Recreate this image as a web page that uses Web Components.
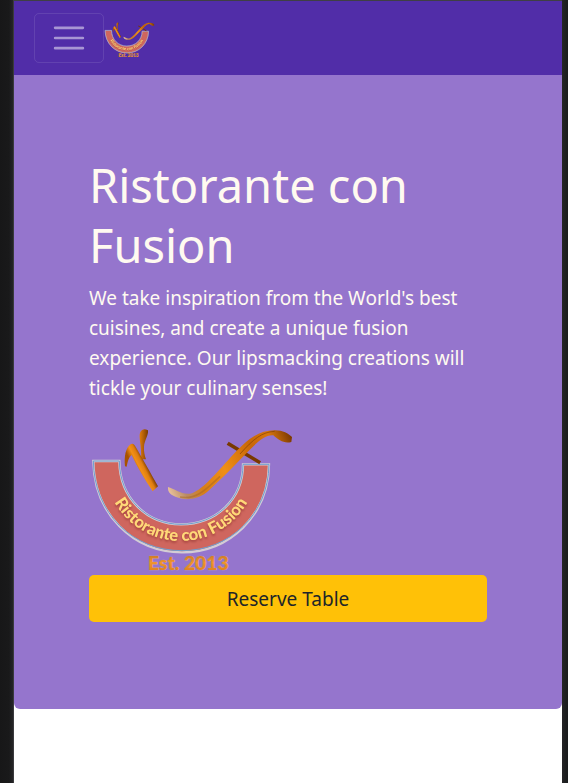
<!DOCTYPE html>
<html lang="en">
<head>
<meta charset="utf-8">
<meta name="viewport" content="width=device-width, initial-scale=1">
<title>Ristorante con Fusion</title>
<style>
  html { background: #19191a; }
  body { margin: 0; font-family: "Noto Sans", "Open Sans", sans-serif; }
</style>
</head>
<body>
<app-frame>
  <nav-bar slot="header"></nav-bar>
  <hero-banner>
    <span slot="title">Ristorante con Fusion</span>
    <span slot="lead">We take inspiration from the World's best cuisines, and create a unique fusion experience. Our lipsmacking creations will tickle your culinary senses!</span>
    <fusion-logo slot="logo"></fusion-logo>
    <reserve-button slot="action">Reserve Table</reserve-button>
  </hero-banner>
</app-frame>
<script>
function define(name, html) {
  customElements.define(name, class extends HTMLElement {
    constructor() {
      super();
      this.attachShadow({ mode: "open" }).innerHTML = html;
    }
  });
}

define("app-frame", `
  <style>
    :host { display: block; box-sizing: border-box; min-height: 100vh; padding: 0 6px 0 13px;
      background: linear-gradient(90deg, #171718, #19191a 9px, #252527 13px, #252527 calc(100% - 6px), #191b1c); }
    .page { box-sizing: border-box; min-height: 100vh; background: #fff;
      border-top: 1px solid #3f3f44; border-left: 1px solid #3a3a3d; }
  </style>
  <div class="page"><slot name="header"></slot><main><slot></slot></main></div>`);

define("nav-bar", `
  <style>
    :host { display: block; background: #512da8; }
    nav { display: flex; align-items: center; padding: 12px 20px; }
    button { box-sizing: border-box; width: 70px; height: 50px; padding: 0; display: grid; place-items: center;
      background: none; border: 1px solid rgba(255,255,255,.1); border-radius: 5px; cursor: pointer; }
    svg { width: 38px; height: 38px; }
    a { display: flex; padding-top: 4px; }
    fusion-logo { width: 51px; }
  </style>
  <nav aria-label="Main">
    <button type="button" aria-label="Toggle navigation" aria-expanded="false">
      <svg viewBox="0 0 30 30" fill="none" stroke="#fff" stroke-opacity=".5" stroke-width="2" stroke-linecap="round" stroke-miterlimit="10"><path d="M4 7h22M4 15h22M4 23h22"/></svg>
    </button>
    <a href="#" aria-label="Home"><fusion-logo></fusion-logo></a>
  </nav>`);

define("hero-banner", `
  <style>
    :host { display: block; padding: 80px 75px 87px; background: #9575cd; color: #fffaf0; border-radius: 0 0 6px 6px; }
    h1 { margin: 0 0 8px; font-size: 47px; line-height: 60px; font-weight: 400; }
    p { margin: 0 0 20px; font-size: 19px; line-height: 30px; }
    .logo { width: 206px; }
  </style>
  <h1><slot name="title"></slot></h1>
  <p><slot name="lead"></slot></p>
  <div class="logo"><slot name="logo"></slot></div>
  <slot name="action"></slot>`);

define("reserve-button", `
  <style>
    :host { display: block; }
    button { display: block; width: 100%; padding: 9px 20px 7px; border: 0; border-radius: 5px;
      background: #ffc107; color: #212529; font: inherit; font-size: 19px; line-height: 31px; cursor: pointer; }
  </style>
  <button type="button"><slot></slot></button>`);

define("fusion-logo", `
  <style>
    :host { display: block; }
    svg { display: block; width: 100%; }
    text { font-family: Lato, "Open Sans", sans-serif; font-weight: 900; text-anchor: middle; }
    .name { font-size: 50px; fill: #ffd978; filter: drop-shadow(0 5px 3px rgba(130,40,35,.6)); }
    .year { font-size: 58px; fill: url(#gold); stroke: #c3a3a0; stroke-width: 2px; paint-order: stroke; }
  </style>
  <svg viewBox="27 9 618 456" role="img" aria-label="Ristorante con Fusion, Est. 2013">
    <defs>
      <linearGradient id="stem" gradientUnits="userSpaceOnUse" x1="165" y1="150" x2="200" y2="132"><stop offset="0" stop-color="#a85200"/><stop offset=".4" stop-color="#f29018"/><stop offset=".7" stop-color="#e07e10"/><stop offset="1" stop-color="#7a3b00"/></linearGradient>
      <linearGradient id="twig" x1="0" y1="0" x2="1" y2="0"><stop offset="0" stop-color="#e07c0c"/><stop offset="1" stop-color="#7a3b00"/></linearGradient>
      <linearGradient id="sweep" gradientUnits="userSpaceOnUse" x1="262" y1="215" x2="636" y2="50"><stop offset="0" stop-color="#edc6a0"/><stop offset=".12" stop-color="#b98a62"/><stop offset=".25" stop-color="#d87e18"/><stop offset=".45" stop-color="#f08f16"/><stop offset=".7" stop-color="#c86708"/><stop offset=".85" stop-color="#d8760c"/><stop offset="1" stop-color="#783700"/></linearGradient>
      <linearGradient id="gold" x1="0" y1="0" x2="0" y2="1"><stop offset="0" stop-color="#b96a20"/><stop offset=".5" stop-color="#f0942c"/><stop offset="1" stop-color="#d97b18"/></linearGradient>
      <path id="curve" d="M73 133A230 230 0 0 0 533 133"/>
    </defs>
    <path d="M40 123H118C119 235 201 313 303 313C409 313 489 238 489 133H567C565 287 448 397 306 397C158 397 42 280 40 123Z" fill="#cf665e" stroke="#d3cdd5" stroke-width="7"/>
    <path d="M40 123H118C119 235 201 313 303 313C409 313 489 238 489 133H567C565 285 448 392 306 392C158 392 42 280 40 123Z" fill="none" stroke="#6f9fd0" stroke-width="3"/>
    <text class="name"><textPath href="#curve" startOffset="50%">Ristorante con Fusion</textPath></text>
    <path d="M183 118C186 78 174 50 181 36Q188 22 204 31C206 46 193 62 192 80C191 94 194 106 198 118Z" fill="url(#twig)"/>
    <path d="M135 139C132 110 137 83 152 73Q158 69 164 76C185 111 211 158 234 199L218 214C194 178 171 140 155 105C144 115 143 127 140 140Z" fill="url(#stem)"/>
    <path d="M446 65L543 124L538 133L440 74Z" fill="#793900"/>
    <path d="M264 201C285 206 310 229 338 219C370 207 410 158 452 112C497 64 530 31 584 31C609 31 625 41 636 51L634 66C612 72 596 60 580 46C555 44 532 66 508 91C465 136 421 180 388 210C361 236 326 242 300 235C280 229 262 223 264 201Z" fill="url(#sweep)"/>
    <path d="M480 102C520 57 546 36 584 34" fill="none" stroke="#783a00" stroke-width="3" opacity=".6"/>
    <path d="M300 231C350 240 378 208 420 169" fill="none" stroke="#a96820" stroke-width="5" opacity=".55"/>
    <text class="year" x="325" y="450">Est. 2013</text>
  </svg>`);
</script>
</body>
</html>
